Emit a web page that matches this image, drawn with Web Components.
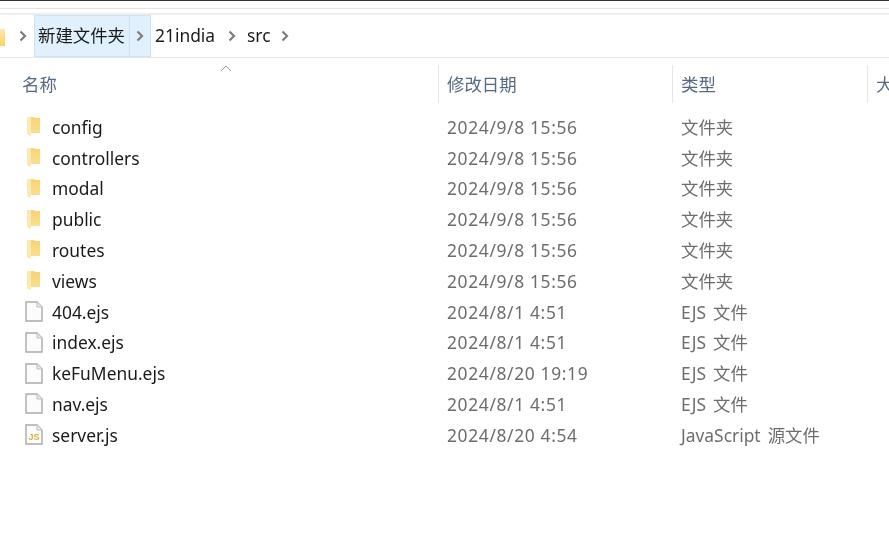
<!DOCTYPE html>
<html>
<head>
<meta charset="utf-8">
<title>src</title>
<style>
  html, body { margin: 0; background: #fff; }
  body {
    width: 889px;
    height: 554px;
    overflow: hidden;
    font-family: "Noto Sans", "Noto Sans CJK SC", sans-serif;
  }
</style>
</head>
<body>

<explorer-window>
  <address-bar slot="address"></address-bar>
  <list-header slot="header"></list-header>
  <file-row name="config" date="2024/9/8 15:56" type="文件夹" icon="folder"></file-row>
  <file-row name="controllers" date="2024/9/8 15:56" type="文件夹" icon="folder"></file-row>
  <file-row name="modal" date="2024/9/8 15:56" type="文件夹" icon="folder"></file-row>
  <file-row name="public" date="2024/9/8 15:56" type="文件夹" icon="folder"></file-row>
  <file-row name="routes" date="2024/9/8 15:56" type="文件夹" icon="folder"></file-row>
  <file-row name="views" date="2024/9/8 15:56" type="文件夹" icon="folder"></file-row>
  <file-row name="404.ejs" date="2024/8/1 4:51" type="EJS 文件" icon="file"></file-row>
  <file-row name="index.ejs" date="2024/8/1 4:51" type="EJS 文件" icon="file"></file-row>
  <file-row name="keFuMenu.ejs" date="2024/8/20 19:19" type="EJS 文件" icon="file"></file-row>
  <file-row name="nav.ejs" date="2024/8/1 4:51" type="EJS 文件" icon="file"></file-row>
  <file-row name="server.js" date="2024/8/20 4:54" type="JavaScript 源文件" icon="js"></file-row>
</explorer-window>

<script>
const chevron = `<svg width="8" height="12" viewBox="0 0 8 12"><path d="M1.5 1.5L6 6l-4.5 4.5" fill="none" stroke="#7d7d7d" stroke-width="2.2"/></svg>`;

const filePage = `
    <path d="M1 1h11l5 5v14H1z" fill="#fcfcfc" stroke="#aaa" stroke-width="1.4"/>
    <path d="M12 1v5h5" fill="#e9e9e9" stroke="#bbb"/>`;

const icons = {
  folder: `<svg width="15" height="21" viewBox="0 0 15 21">
    <defs><linearGradient id="body" x1="0" y1="0" x2="0" y2="1"><stop offset="0" stop-color="#f7d472"/><stop offset="1" stop-color="#fae199"/></linearGradient></defs>
    <path d="M1 1h7l1 1h5v15H5v3l-4-2z" fill="url(#body)"/>
    <path d="M1 1h4v19l-4-2z" fill="#fce9b0"/>
  </svg>`,
  file: `<svg width="18" height="21" viewBox="0 0 18 21">${filePage}</svg>`,
  js: `<svg width="18" height="21" viewBox="0 0 18 21">${filePage}
    <text x="9" y="16" font-size="9" font-weight="700" text-anchor="middle" fill="#d4b53a" font-family="Liberation Sans">JS</text>
  </svg>`
};

class ExplorerWindow extends HTMLElement {
  constructor() {
    super();
    this.attachShadow({ mode: 'open' });
    this.shadowRoot.innerHTML = `
      <style>
        :host { display: block; width: 889px; height: 554px; overflow: hidden; background: #fff; filter: blur(.35px); }
        .edge { height: 1px; background: #333; }
        .rule1 { height: 1px; margin-top: 7px; background: #e3e3e3; }
        .rule2 { height: 2px; margin-top: 4px; background: #eee; }
        .rows { display: flex; flex-direction: column; padding-top: 8.4px; }
      </style>
      <div class="edge"></div>
      <div class="rule1"></div>
      <div class="rule2"></div>
      <slot name="address"></slot>
      <slot name="header"></slot>
      <div class="rows"><slot></slot></div>
    `;
  }
}

class AddressBar extends HTMLElement {
  constructor() {
    super();
    this.attachShadow({ mode: 'open' });
    this.shadowRoot.innerHTML = `
      <style>
        :host {
          display: flex;
          height: 43px;
          box-sizing: border-box;
          align-items: stretch;
          border-bottom: 1px solid #e5e5e5;
          font-size: 17.4px;
          line-height: 24px;
          color: #1a1a1a;
          overflow: hidden;
        }
        .stub { width: 5px; display: flex; align-items: center; }
        .stub i { display: block; width: 5px; height: 17px; margin-top: 3px; background: linear-gradient(#fce7ad, #fbd366); }
        .sep { display: flex; align-items: center; justify-content: center; }
        .crumb { display: flex; align-items: center; white-space: nowrap; padding-bottom: 2px; box-sizing: border-box; }
        .on { background: #e1f0fd; border: 1px solid #cce4f7; }
        .name { width: 96px; padding-left: 3px; }
        .arrow { width: 22px; justify-content: center; border-left-color: #cfe3f3; margin-left: -1px; padding-bottom: 0; }
      </style>
      <div class="stub"><i></i></div>
      <div class="sep" style="width:29px;padding-left:7px;box-sizing:border-box">${chevron}</div>
      <div class="crumb on name">新建文件夹</div>
      <div class="crumb on arrow">${chevron}</div>
      <div class="crumb" style="padding-left:4px;width:66px">21india</div>
      <div class="sep" style="width:30px">${chevron}</div>
      <div class="crumb" style="width:23px">src</div>
      <div class="sep" style="width:30px">${chevron}</div>
    `;
  }
}

class ListHeader extends HTMLElement {
  constructor() {
    super();
    this.attachShadow({ mode: 'open' });
    this.shadowRoot.innerHTML = `
      <style>
        :host {
          display: grid;
          grid-template-columns: 438px 234px 195px 1fr;
          height: 38px;
          margin-top: 7px;
          position: relative;
          font-size: 17.4px;
          line-height: 24px;
          color: #566a82;
        }
        div { display: flex; align-items: center; box-sizing: border-box; white-space: nowrap; overflow: hidden; padding-left: 8px; padding-bottom: 1px; }
        div + div { border-left: 1px solid #e5e5e5; }
        .first { padding-left: 22px; }
        .sort { position: absolute; left: 220px; top: 0; }
      </style>
      <div class="first">名称</div>
      <div>修改日期</div>
      <div>类型</div>
      <div>大</div>
      <svg class="sort" width="12" height="7" viewBox="0 0 12 7"><path d="M1 6l5-5 5 5" fill="none" stroke="#9a9a9a"/></svg>
    `;
  }
}

class FileRow extends HTMLElement {
  constructor() {
    super();
    this.attachShadow({ mode: 'open' });
    const name = this.getAttribute('name');
    const date = this.getAttribute('date');
    const type = this.getAttribute('type');
    const icon = this.getAttribute('icon');
    this.shadowRoot.innerHTML = `
      <style>
        :host {
          display: grid;
          grid-template-columns: 438px 234px 1fr;
          height: 30.8px;
          align-items: center;
          font-size: 17.4px;
          line-height: 24px;
          color: #6d6d6d;
        }
        .name { display: flex; align-items: center; color: #1a1a1a; padding-left: ${icon === 'folder' ? 26 : 25}px; }
        .icon { width: ${icon === 'folder' ? 26 : 27}px; display: flex; height: 21px; }
        .cell { padding-left: 9px; white-space: nowrap; }
        .date { letter-spacing: .65px; }
        .type { word-spacing: 2.5px; }
      </style>
      <div class="name"><span class="icon">${icons[icon]}</span><span>${name}</span></div>
      <div class="cell date">${date}</div>
      <div class="cell type">${type}</div>
    `;
  }
}

customElements.define('explorer-window', ExplorerWindow);
customElements.define('address-bar', AddressBar);
customElements.define('list-header', ListHeader);
customElements.define('file-row', FileRow);
</script>
</body>
</html>
